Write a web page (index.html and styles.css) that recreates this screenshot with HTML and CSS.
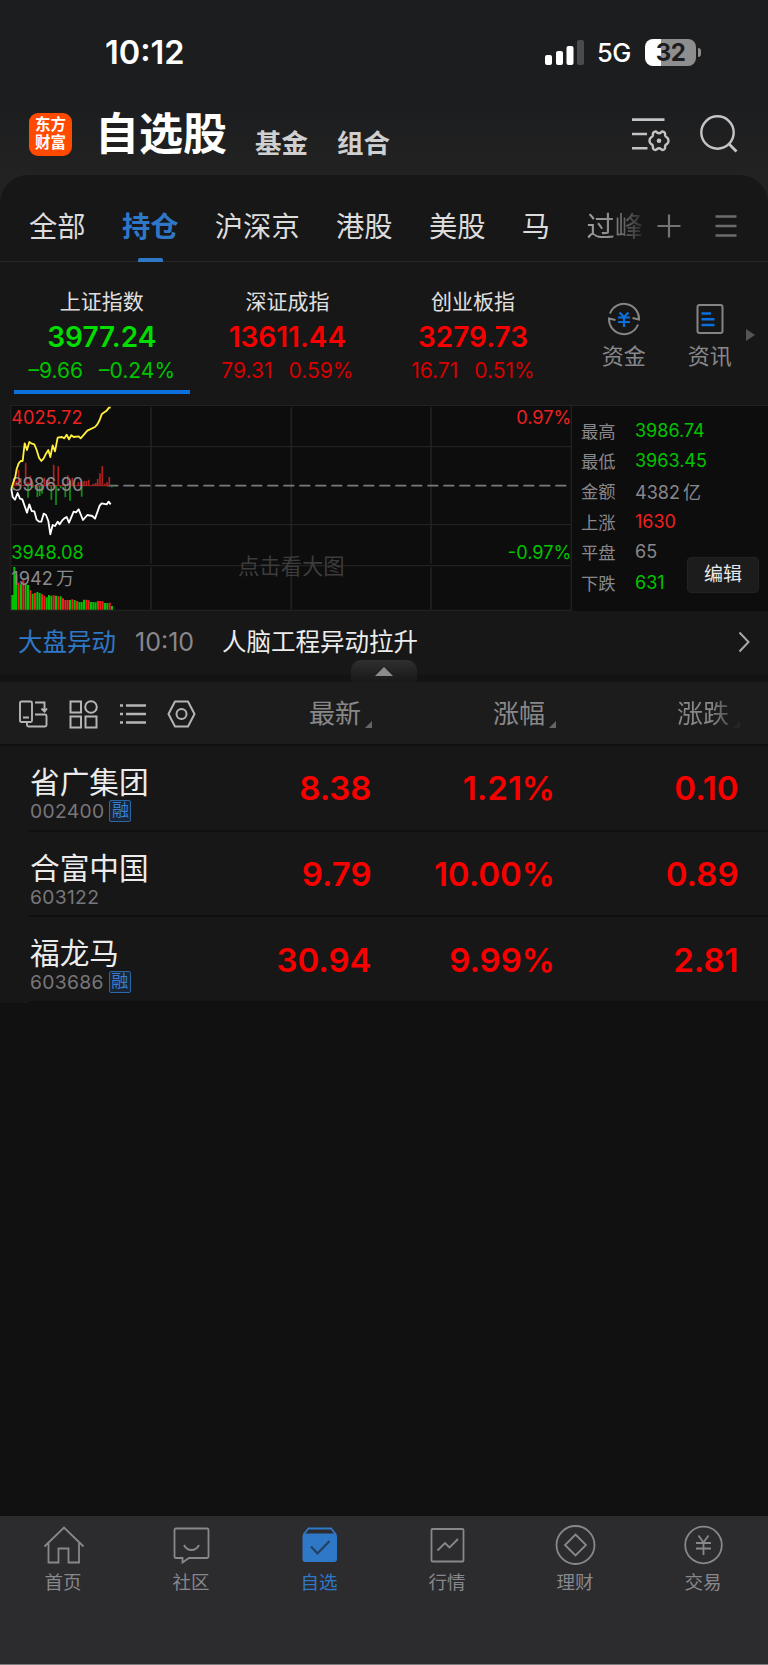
FILE: index.html
```html
<!DOCTYPE html>
<html lang="zh-CN">
<head>
    <meta charset="UTF-8">
    <meta name="viewport" content="width=device-width, initial-scale=1.0">
    <title>自选股</title>
    <link rel="stylesheet" href="styles.css">
</head>
<body>
    <header class="header">
        <div class="status-bar">
            <span class="clock">10:12</span>
            <div class="status-right">
                <svg class="signal" width="39" height="25" viewBox="0 0 39 25">
                    <rect x="0" y="15" width="7" height="10" rx="2" fill="#fff"/>
                    <rect x="11" y="11" width="7" height="14" rx="2" fill="#fff"/>
                    <rect x="21.5" y="6" width="7" height="19" rx="2" fill="#fff"/>
                    <rect x="32" y="0" width="7" height="25" rx="2" fill="#4a4b4c"/>
                </svg>
                <span class="network">5G</span>
                <span class="battery">32</span>
                <span class="battery-cap"></span>
            </div>
        </div>
        <div class="title-bar">
            <div class="logo">东方<br>财富</div>
            <h1>自选股</h1>
            <a class="title-link">基金</a>
            <a class="title-link">组合</a>
            <div class="title-icons">
                <svg width="38" height="36" viewBox="0 0 38 36" fill="none" stroke="#c4c4c4" stroke-width="2.6">
                    <path d="M0 3.6H32.5M0 18H15M0 32.3H15.5"/>
                    <path stroke-width="2.4" stroke-linejoin="round" d="M22 16Q24 15 25 16.500Q27 18 29 16.500Q30 15 32 16Q33.500 17 33 19Q33.200 21 35 21.500Q36.500 22.500 36.500 24.800Q36.500 27 35 28Q33.200 28.500 33 30.500Q33.500 32.500 32 33.500Q30 34.500 29 33Q27 31.500 25 33Q24 34.500 22 33.500Q20.500 32.500 21 30.500Q20.800 28.500 19 28Q17.500 27 17.500 24.800Q17.500 22.500 19 21.500Q20.800 21 21 19Q20.500 17 22 16z"/>
                    <circle cx="27" cy="24.800" r="2.300" fill="#c4c4c4" stroke="none"/>
                </svg>
                <svg width="38" height="38" viewBox="0 0 38 38" fill="none" stroke="#c4c4c4" stroke-width="2.400">
                    <circle cx="17.500" cy="17.500" r="16.200"/>
                    <path d="M28.500 28.500L36.500 36.500" stroke-width="2.800"/>
                </svg>
            </div>
        </div>
    </header>

    <main class="panel">
        <nav class="tabs">
            <a>全部</a>
            <a class="active">持仓</a>
            <a>沪深京</a>
            <a>港股</a>
            <a>美股</a>
            <a>马</a>
            <a class="faded">过峰</a>
            <svg class="tab-add" width="24" height="24" viewBox="0 0 24 24" stroke="#747474" stroke-width="2.200">
                <path d="M0.500 12H23.500M12 0.500V23.500"/>
            </svg>
            <svg class="tab-menu" width="22" height="22" viewBox="0 0 22 22" stroke="#6c6c6c" stroke-width="2.300">
                <path d="M0.500 1.500H21.500M0.500 11H21.500M0.500 20.500H21.500"/>
            </svg>
        </nav>

        <section class="indices">
            <div class="index down selected">
                <div class="index-name">上证指数</div>
                <div class="index-value">3977.24</div>
                <div class="index-change"><span>–9.66</span><span>–0.24%</span></div>
            </div>
            <div class="index up">
                <div class="index-name">深证成指</div>
                <div class="index-value">13611.44</div>
                <div class="index-change"><span>79.31</span><span>0.59%</span></div>
            </div>
            <div class="index up">
                <div class="index-name">创业板指</div>
                <div class="index-value">3279.73</div>
                <div class="index-change"><span>16.71</span><span>0.51%</span></div>
            </div>
            <div class="shortcut">
                <svg width="34" height="34" viewBox="0 0 34 34" fill="none" stroke="#858585" stroke-width="2">
                    <path d="M3 11.500A15 15 0 0 1 32 17.500L25.500 16"/>
                    <path d="M31 22.500A15 15 0 0 1 2 16.500L8.500 18"/>
                    <path stroke="#0b6fdc" stroke-width="2.200" d="M12.500 10.500L17 15L21.500 10.500M11 15.500H23M11 20H23M17 15V25"/>
                </svg>
                <span>资金</span>
            </div>
            <div class="shortcut">
                <svg width="34" height="34" viewBox="0 0 34 34" fill="none" stroke="#858585" stroke-width="2">
                    <rect x="4.500" y="3" width="25" height="28" rx="2"/>
                    <path stroke="#0b6fdc" stroke-width="2.400" d="M8.500 11.500H18M8.500 17.300H21.500M8.500 23H21.500"/>
                </svg>
                <span>资讯</span>
            </div>
            <span class="more-arrow"></span>
        </section>

        <section class="market">
            <!-- intraday chart, 3 units per pixel -->
            <svg class="chart" width="572" height="206" viewBox="0 30 1716 618">
                <rect x="32" y="30" width="1684" height="618" fill="#0d0d0d"/>
                <g stroke="#222222" stroke-width="4" fill="none">
                    <path d="M30 31H1716M32 30V647M30 646H1716M1714 30V648"/>
                    <path d="M32 155H1714M32 389H1714M32 512H1714"/>
                    <path stroke-width="5" d="M453 37V506M453 517V644M874 37V506M874 517V644M1293 37V506M1293 517V644"/>
                </g>
                <text class="hint" x="714" y="536">点击看大图</text>
                <path class="dashes" d="M322 272H1706"/>
                <path class="bars red" d="M42 272V255M49 272V258M56 272V225M63 272V250M77 272V203M84 272V262M91 272V242M98 272V262M133 272V248M140 272V255M147 272V252M161 272V209M175 272V214M189 272V264M203 272V241M210 272V258M217 272V248M235 272V262M242 272V260M252 272V258M259 272V258M266 272V254M280 272V266M287 272V264M293 272V252M300 272V235M307 272V213M314 272V266M321 272V262M328 272V246"/>
                <path class="bars green" d="M84 272V308M98 272V278M112 272V306M119 272V303M126 272V296M154 272V314M168 272V330M182 272V280M196 272V307M210 272V317M245 272V305M335 272V277"/>
                <path d="M36 272H330" stroke="#b02222" stroke-width="3"/>
                <g class="chart-text">
                    <text x="34" y="86" fill="#ee2020">4025.72</text>
                    <text x="34" y="289" fill="#8b8a90">3986.90</text>
                    <text x="34" y="491" fill="#00c400">3948.08</text>
                    <text x="1714" y="86" fill="#ee2020" text-anchor="end">0.97%</text>
                    <text x="1714" y="491" fill="#00c400" text-anchor="end">-0.97%</text>
                </g>
                <path class="line" stroke="#fff03c" d="M34 282L40 262L46 245L50 222L56 205L62 198H68L74 145L81 165L88 141L96 146L103 148L110 165L117 188L124 198L131 190L138 176L145 165L151 186L158 151L165 169L173 128L186 126L193 130L200 119L207 133L214 121L221 126L236 124L242 130L262 107L285 96L292 88L299 75L305 58L313 52L320 47L327 38H332"/>
                <path class="line" stroke="#ffffff" d="M34 282L38 306L45 314L53 294L60 311L67 313L81 353L88 328L95 348L103 349L110 374L117 380H124L131 356L138 360L145 378L151 418L158 390L165 393L173 380L179 388L186 377L193 370L200 366L207 383L221 350L228 352L236 343L249 375L262 360L277 363L285 371L299 332L305 325L320 328L326 320L332 328"/>
                <path class="volume green" d="M37 644V600M43 644V516M49 644V540M63 644V568M77 644V568M84 644V570M98 644V596M112 644V591M119 644V594M140 644V607M147 644V600M154 644V602M168 644V602M182 644V604M210 644V615M224 644V615M238 644V621M245 644V621M252 644V614M273 644V621M280 644V621M287 644V622M315 644V624M322 644V624M336 644V633"/>
                <path class="volume red" d="M56 644V563M70 644V556M91 644V586M105 644V594M126 644V598M133 644V602M161 644V601M175 644V604M189 644V610M196 644V615M203 644V615M217 644V613M231 644V618M259 644V614M266 644V616M294 644V618M301 644V618M308 644V619M329 644V623"/>
                <text class="chart-text" x="34" y="569" fill="#8b8a90">1942<tspan dx="10">万</tspan></text>
            </svg>
            <div class="stats">
                <div class="stat"><label>最高</label><span class="green">3986.74</span></div>
                <div class="stat"><label>最低</label><span class="green">3963.45</span></div>
                <div class="stat"><label>金额</label><span class="amount">4382 亿</span></div>
                <div class="stat"><label>上涨</label><span class="red">1630</span></div>
                <div class="stat"><label>平盘</label><span>65</span></div>
                <div class="stat"><label>下跌</label><span class="green">631</span></div>
                <button class="edit-button">编辑</button>
            </div>
        </section>

        <section class="news">
            <span class="news-label">大盘异动</span>
            <span class="news-time">10:10</span>
            <span class="news-text">人脑工程异动拉升</span>
            <svg width="12" height="22" viewBox="0 0 12 22" fill="none" stroke="#a8a8a8" stroke-width="2">
                <path d="M1.500 1.500L10.500 11L1.500 20.500"/>
            </svg>
            <span class="collapse-handle"><i></i></span>
        </section>

        <section class="table-head">
            <div class="tools">
                <svg width="29" height="28" viewBox="0 0 29 28" fill="none" stroke="#b5b5b5" stroke-width="1.900">
                    <path d="M1 21.500V3Q1 1.500 2.500 1.500H11.500Q13 1.500 13 3V20.500Q13 22 11.500 22H2.500Q1 22 1 20.500M4 17.500H10"/>
                    <path d="M16 2.500H25.500V11M22.500 8.500L25.500 11.500L28 8.500M16 14.500H26Q27.500 14.500 27.500 16V25Q27.500 26.500 26 26.500H9.500Q8 26.500 8 25V22"/>
                </svg>
                <svg width="29" height="29" viewBox="0 0 29 29" fill="none" stroke="#b5b5b5" stroke-width="2">
                    <rect x="1.500" y="1.500" width="10.500" height="11"/>
                    <circle cx="22" cy="7" r="5.800"/>
                    <rect x="1.500" y="16.500" width="10.500" height="11"/>
                    <rect x="16.500" y="16.500" width="11" height="11"/>
                </svg>
                <svg width="26" height="22" viewBox="0 0 26 22" stroke="#b5b5b5" stroke-width="2.400">
                    <path d="M0 2.500H3M6 2.500H26M0 11H3M6 11H26M0 19.500H3M6 19.500H26"/>
                </svg>
                <svg width="29" height="28" viewBox="0 0 29 28" fill="none" stroke="#b5b5b5" stroke-width="2">
                    <path stroke-linejoin="round" d="M1.500 14L8 1.500H21L27.500 14L21 26.500H8z"/>
                    <circle cx="14.500" cy="14" r="5"/>
                </svg>
            </div>
            <div class="column">最新<i></i></div>
            <div class="column">涨幅<i></i></div>
            <div class="column last">涨跌<i></i></div>
        </section>

        <section class="stocks">
            <div class="stock">
                <div class="stock-info">
                    <div class="stock-name">省广集团</div>
                    <div class="stock-code">002400<em>融</em></div>
                </div>
                <div class="number">8.38</div>
                <div class="number">1.21%</div>
                <div class="number">0.10</div>
            </div>
            <div class="stock">
                <div class="stock-info">
                    <div class="stock-name">合富中国</div>
                    <div class="stock-code">603122</div>
                </div>
                <div class="number">9.79</div>
                <div class="number">10.00%</div>
                <div class="number">0.89</div>
            </div>
            <div class="stock">
                <div class="stock-info">
                    <div class="stock-name">福龙马</div>
                    <div class="stock-code">603686<em>融</em></div>
                </div>
                <div class="number">30.94</div>
                <div class="number">9.99%</div>
                <div class="number">2.81</div>
            </div>
        </section>
    </main>

    <footer class="bottom-nav">
        <a>
            <svg width="42" height="40" viewBox="0 0 42 40"><path d="M1.500 21.500L21 2.500L40.500 21.500M5.500 18V37.500H15.500V23.500H25.500V37.500H36V18"/></svg>
            <span>首页</span>
        </a>
        <a>
            <svg width="42" height="40" viewBox="0 0 42 40"><path d="M5 3.500H36Q37.500 3.500 37.500 5V31.500Q37.500 33 36 33H18L11.500 37.500V33H5Q3.500 33 3.500 31.500V5Q3.500 3.500 5 3.500M13 20Q15.500 25 20.500 25T28 20"/></svg>
            <span>社区</span>
        </a>
        <a class="active">
            <svg width="42" height="40" viewBox="0 0 42 40">
                <path d="M4.500 9.500L9.500 3.500H32L37 9.500" />
                <rect x="3.500" y="8.500" width="34.500" height="28.500" rx="3" fill="#2f78c8" stroke="none"/>
                <path d="M12 21.500L18.500 28.500L30.500 16" stroke="#24405f" stroke-width="2.200"/>
            </svg>
            <span>自选</span>
        </a>
        <a>
            <svg width="42" height="40" viewBox="0 0 42 40"><rect x="4.500" y="4" width="32" height="32.500" rx="1"/><path d="M10.500 25.500L18 18L22.500 22.500L31 14"/></svg>
            <span>行情</span>
        </a>
        <a>
            <svg width="42" height="40" viewBox="0 0 42 40"><circle cx="20.500" cy="20" r="19"/><path d="M20.500 9.500L31 20L20.500 30.500L10 20z"/></svg>
            <span>理财</span>
        </a>
        <a>
            <svg width="42" height="40" viewBox="0 0 42 40"><circle cx="20.500" cy="20" r="18.300"/><path d="M15.500 10.500L20.500 17.500L25.500 10.500M13 18H28M13 23.500H28M20.500 17.500V30"/></svg>
            <span>交易</span>
        </a>
    </footer>
</body>
</html>
```

FILE: styles.css
```css
* {
    box-sizing: border-box;
}
body {
    margin: 0;
    width: 768px;
    height: 1665px;
    display: flex;
    flex-direction: column;
    overflow: hidden;
    background-color: #111111;
    color: #e0e0e0;
    font-family: Inter, "Noto Sans CJK SC", sans-serif;
}
svg {
    display: block;
    flex-shrink: 0;
}

/* header */
.header {
    height: 205px;
    flex-shrink: 0;
    background: linear-gradient(#1c1d1f 50%, #222222 85%);
}
.status-bar {
    height: 106px;
    padding: 0 67px 2px 105px;
    display: flex;
    justify-content: space-between;
    align-items: center;
    color: #ffffff;
}
.clock {
    font-size: 32.5px;
    font-weight: 600;
}
.status-right {
    display: flex;
    align-items: center;
}
.signal {
    margin-right: 13px;
}
.network {
    font-size: 25.5px;
    font-weight: 500;
    letter-spacing: -0.5px;
    width: 34px;
    margin-right: 14px;
    white-space: nowrap;
}
.battery {
    width: 51px;
    height: 27px;
    border-radius: 8px;
    background: linear-gradient(90deg, #ffffff 32%, #8e8e8e 32%);
    color: #1c1d1f;
    font-size: 24px;
    font-weight: 700;
    line-height: 27px;
    text-align: center;
    letter-spacing: -0.5px;
}
.battery-cap {
    width: 3px;
    height: 9px;
    margin-left: 2px;
    border-radius: 0 3px 3px 0;
    background-color: #8e8e8e;
}
.title-bar {
    height: 56px;
    padding: 0 30px 0 29px;
    display: flex;
    align-items: center;
}
.logo {
    width: 43px;
    height: 43px;
    border-radius: 9px;
    background-color: #ff4a00;
    color: #ffffff;
    font-size: 15.5px;
    font-weight: 700;
    line-height: 18px;
    text-align: center;
    padding-top: 3px;
}
h1 {
    margin: 0 28px 0 23px;
    font-size: 44px;
    font-weight: 700;
    line-height: 56px;
    color: #ffffff;
}
.title-link {
    margin: 17px 29px 0 0;
    font-size: 26.5px;
    font-weight: 700;
    line-height: 36px;
    color: #cfcfcf;
}
.title-icons {
    margin-left: auto;
    display: flex;
    align-items: center;
    gap: 30px;
}

/* panel with group tabs */
.panel {
    flex: 1;
    margin-top: -30px;
    border-radius: 28px 28px 0 0;
    background: linear-gradient(#171717 828px, #111111 828px);
}
.tabs {
    height: 87px;
    padding: 0 32px 0 29px;
    display: flex;
    align-items: center;
    gap: 36.3px;
    border-bottom: 1px solid #262626;
    font-size: 28.3px;
    color: #dcdcdc;
}
.tabs a {
    position: relative;
    line-height: 40px;
    margin-top: 17px;
    white-space: nowrap;
}
.tabs .active {
    color: #2f78c8;
    font-weight: 700;
}
.tabs .active::after {
    content: "";
    position: absolute;
    left: 16px;
    bottom: -15px;
    width: 25px;
    height: 4px;
    border-radius: 2px 2px 0 0;
    background-color: #2f78c8;
}
.tabs .faded {
    background: linear-gradient(90deg, #a0a0a0, #8a8a8a 45%, #2a2a2a);
    -webkit-background-clip: text;
    background-clip: text;
    color: transparent;
}
.tab-add {
    margin: 15px -3px 0 -22px;
}
.tab-menu {
    margin-top: 15px;
}

/* index cards */
.indices {
    height: 143px;
    padding-left: 9px;
    display: flex;
}
.index {
    width: 185.6px;
    padding-top: 25px;
    text-align: center;
}
.index.selected {
    background: linear-gradient(#0b6fdc, #0b6fdc) 5px 128px / 176px 4px no-repeat;
}
.index-name {
    font-size: 21px;
    line-height: 30px;
}
.index-value {
    font-size: 28px;
    font-weight: 600;
    line-height: 40px;
}
.index-change {
    display: flex;
    justify-content: center;
    gap: 16px;
    font-size: 21px;
    line-height: 28px;
}
.up .index-value {
    color: #f80000;
}
.up .index-change {
    color: #d80000;
}
.down .index-value {
    color: #00dd00;
}
.down .index-change {
    color: #00c400;
}
.shortcut {
    width: 86px;
    padding-top: 40px;
    display: flex;
    flex-direction: column;
    align-items: center;
    font-size: 22px;
    line-height: 40px;
    color: #88878c;
}
.shortcut:nth-child(4) {
    margin-left: 15px;
}
.more-arrow {
    margin: 67px 0 0 -7px;
    height: 12px;
    border-left: 9px solid #555555;
    border-top: 6px solid transparent;
    border-bottom: 6px solid transparent;
}

/* chart and stats */
.market {
    height: 206px;
    display: flex;
}
.chart-text {
    font-size: 54.5px;
}
.hint {
    font-size: 64px;
    fill: #3c3c3c;
}
.dashes {
    stroke: #7b7a80;
    stroke-width: 5;
    stroke-dasharray: 33 15;
}
.line {
    fill: none;
    stroke-width: 5.5;
    stroke-linejoin: round;
}
.bars {
    stroke-width: 5;
}
.bars.red {
    stroke: #b02222;
}
.bars.green {
    stroke: #0d9412;
}
.volume {
    stroke-width: 6;
}
.volume.red {
    stroke: #ee2020;
}
.volume.green {
    stroke: #00c400;
}
.stats {
    position: relative;
    flex: 1;
    padding: 9px 0 0 9px;
    border-top: 1px solid #222222;
    background-color: #0d0d0d;
}
.stat {
    height: 30.4px;
    display: flex;
    align-items: center;
    font-size: 18px;
    color: #88878c;
}
.stat label {
    width: 54px;
    font-size: 17.3px;
}
.stat .amount {
    word-spacing: -2px;
}
.stat .green {
    color: #00c400;
}
.stat .red {
    color: #ee2020;
}
.edit-button {
    position: absolute;
    right: 9px;
    top: 151px;
    width: 72px;
    height: 36px;
    padding: 0;
    border: 1px solid #222222;
    border-radius: 4px;
    background-color: #1c1c1c;
    color: #e8e8e8;
    font-family: inherit;
    font-size: 19px;
    line-height: 34px;
}

/* news line */
.news {
    position: relative;
    height: 71px;
    padding: 0 18px 3px 18px;
    display: flex;
    align-items: center;
    border-bottom: 7px solid #131313;
    font-size: 24.5px;
    line-height: 36px;
}
.news-label {
    color: #2f78c8;
}
.news-time {
    margin: 0 26px 0 19px;
    color: #88878c;
    font-size: 25px;
    width: 61px;
}
.news-text {
    flex: 1;
    color: #ececec;
}
.collapse-handle {
    position: absolute;
    left: 351px;
    bottom: -7px;
    width: 66px;
    height: 22px;
    padding: 7px 0 0 24px;
    border-radius: 10px 10px 0 0;
    background: linear-gradient(#2f2f2f, #181818);
}
.collapse-handle i {
    display: block;
    width: 18px;
    border-bottom: 9px solid #8c8c8c;
    border-left: 9px solid transparent;
    border-right: 9px solid transparent;
}

/* stock table */
.table-head {
    height: 64px;
    padding: 2px 0 0 19px;
    display: flex;
    align-items: center;
    border-bottom: 2px solid #111111;
    background-color: #1c1c1c;
    font-size: 26px;
    line-height: 36px;
    color: #88888a;
}
.tools {
    width: 169px;
    display: flex;
    align-items: center;
    gap: 21.3px;
}
.column {
    width: 184px;
    display: flex;
    justify-content: flex-end;
    align-items: flex-end;
}
.column i {
    margin: 0 0 4px 4px;
    border-left: 7px solid transparent;
    border-bottom: 7px solid #66666a;
}
.column.last {
    background: linear-gradient(90deg, #88888a 84%, #3a3a3a 98%);
    -webkit-background-clip: text;
    background-clip: text;
    color: transparent;
}
.column.last i {
    border-bottom-color: #262626;
}
.stock {
    height: 85.7px;
    display: flex;
    align-items: center;
    background: linear-gradient(#101010, #101010) 29px bottom / 100% 2px no-repeat;
}
.stock-info {
    width: 188px;
    padding: 10px 0 0 30px;
}
.stock-name {
    font-size: 29.7px;
    line-height: 34px;
    color: #ececec;
    white-space: nowrap;
}
.stock-code {
    height: 24px;
    display: flex;
    align-items: center;
    gap: 5px;
    font-size: 19.3px;
    letter-spacing: 0.3px;
    color: #77767b;
}
.stock-code em {
    width: 22px;
    height: 22px;
    border: 1px solid #2c66a6;
    border-radius: 2px;
    background-color: #182638;
    color: #3a80d0;
    font-size: 17px;
    font-style: normal;
    line-height: 19px;
    text-align: center;
    letter-spacing: 0;
}
.number {
    width: 183.5px;
    padding-bottom: 1px;
    font-size: 33px;
    font-weight: 600;
    text-align: right;
    color: #f80000;
}

/* bottom navigation */
.bottom-nav {
    height: 149px;
    flex-shrink: 0;
    display: flex;
    background-color: #2c2c2e;
    border-bottom: 1px solid #7c7c7e;
}
.bottom-nav a {
    width: 128px;
    padding-top: 9px;
    display: flex;
    flex-direction: column;
    align-items: center;
    gap: 4px;
    color: #88878c;
    font-size: 18.5px;
    line-height: 26px;
}
.bottom-nav span {
    margin-right: 2px;
}
.bottom-nav svg {
    fill: none;
    stroke: #88878c;
    stroke-width: 1.8;
}
.bottom-nav .active {
    color: #2f78c8;
}
.bottom-nav .active svg {
    stroke: #2f78c8;
}
```
